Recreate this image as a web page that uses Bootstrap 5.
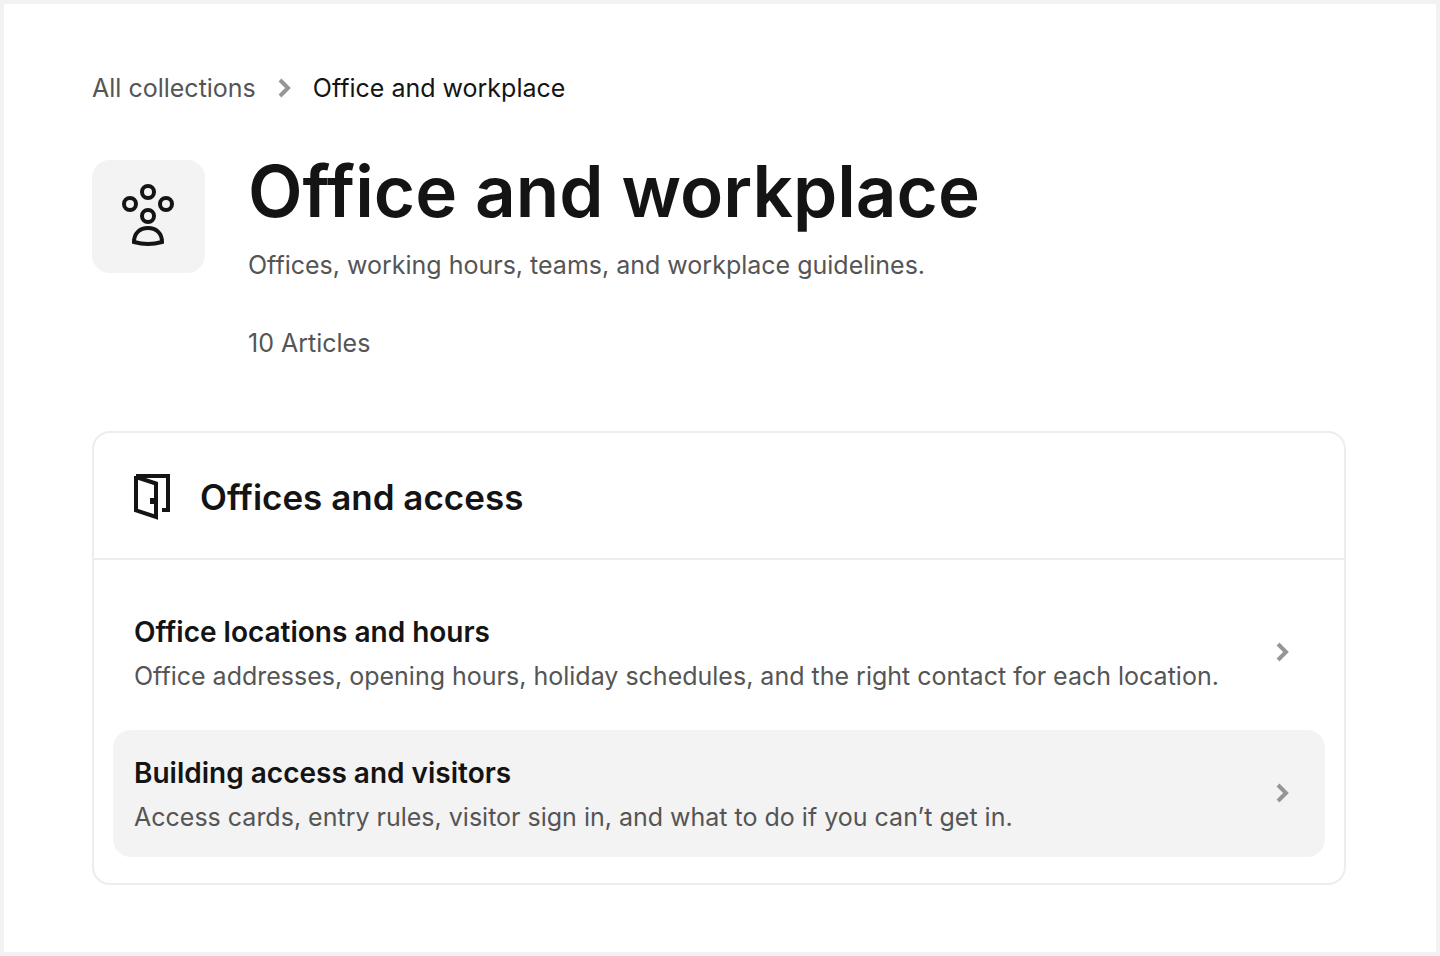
<!DOCTYPE html>
<html lang="en">
<head>
<meta charset="utf-8">
<meta name="viewport" content="width=device-width, initial-scale=1">
<title>Office and workplace</title>
<link href="https://cdn.jsdelivr.net/npm/bootstrap@5.3.0/dist/css/bootstrap.min.css" rel="stylesheet">
<style>
body{font-family:Inter,"Liberation Sans",sans-serif;font-size:25px;line-height:32px;color:#141414;background:#fff}
a{color:inherit;text-decoration:none}
.page-frame{border:4px solid #f2f2f2;padding:68px 90px 60px 88px}
.muted{color:#555}
.crumbs{gap:22px}
.hero{margin-top:56px;gap:43px}
.hero-icon{width:113px;height:113px;border-radius:18px;background:#f3f3f3}
.hero h1{font-size:71px;line-height:62px;font-weight:600}
.hero-sub{margin-top:27px}
.hero-count{margin-top:46px}
.panel{margin-top:72px;border:2px solid #ededed;border-radius:18px}
.panel-head{padding:33px 40px 29px;gap:30px;border-bottom:2px solid #ededed}
.panel-head h2{font-size:35px;line-height:63px;font-weight:600}
.panel-list{padding:29px 19px 26px;gap:14px}
.entry{padding:22px 36px 23px 21px;border-radius:18px}
.entry.is-active{background:#f3f3f3}
.entry h3{font-size:28px;line-height:42px;font-weight:600;margin-bottom:7px}
.entry p{line-height:33px}
</style>
</head>
<body>
<main class="page-frame min-vh-100">
<nav aria-label="Breadcrumb" class="crumbs d-flex align-items-center">
<a href="#" class="muted">All collections</a>
<svg width="13" height="20" viewBox="0 0 13 20" fill="none" stroke="#969696" stroke-width="4"><path d="M2 2l8 8-8 8"/></svg>
<a href="#" aria-current="page">Office and workplace</a>
</nav>
<header class="hero d-flex align-items-start">
<div class="hero-icon d-flex flex-shrink-0 align-items-center justify-content-center">
<svg width="113" height="113" viewBox="0 0 113 113" fill="none" stroke="#141414" stroke-width="4"><circle cx="56" cy="32" r="6"/><circle cx="38" cy="44" r="6"/><circle cx="74" cy="44" r="6"/><circle cx="56" cy="56" r="6"/><path d="M42 82C42 73 48 68 56 68S70 73 70 82Q56 86 42 82Z"/></svg>
</div>
<div>
<h1 class="mb-0">Office and workplace</h1>
<p class="hero-sub muted mb-0">Offices, working hours, teams, and workplace guidelines.</p>
<p class="hero-count muted mb-0">10 Articles</p>
</div>
</header>
<section class="panel">
<div class="panel-head d-flex align-items-center">
<svg width="36" height="48" viewBox="0 0 36 48" fill="none" stroke="#141414" stroke-width="4"><path d="M2 2H34V36H28M2 2V36.300L22 43V9.500L2 3"/><path d="M16 24h8v6h-8z" fill="#141414" stroke="none"/></svg>
<h2 class="mb-0">Offices and access</h2>
</div>
<div class="panel-list d-flex flex-column">
<a href="#" class="entry d-flex align-items-center justify-content-between">
<div><h3>Office locations and hours</h3><p class="muted mb-0">Office addresses, opening hours, holiday schedules, and the right contact for each location.</p></div>
<svg class="flex-shrink-0" width="13" height="20" viewBox="0 0 13 20" fill="none" stroke="#969696" stroke-width="4"><path d="M2 2l8 8-8 8"/></svg>
</a>
<a href="#" class="entry is-active d-flex align-items-center justify-content-between">
<div><h3>Building access and visitors</h3><p class="muted mb-0">Access cards, entry rules, visitor sign in, and what to do if you can’t get in.</p></div>
<svg class="flex-shrink-0" width="13" height="20" viewBox="0 0 13 20" fill="none" stroke="#969696" stroke-width="4"><path d="M2 2l8 8-8 8"/></svg>
</a>
</div>
</section>
</main>
<script src="https://cdn.jsdelivr.net/npm/bootstrap@5.3.0/dist/js/bootstrap.bundle.min.js"></script>
</body>
</html>
